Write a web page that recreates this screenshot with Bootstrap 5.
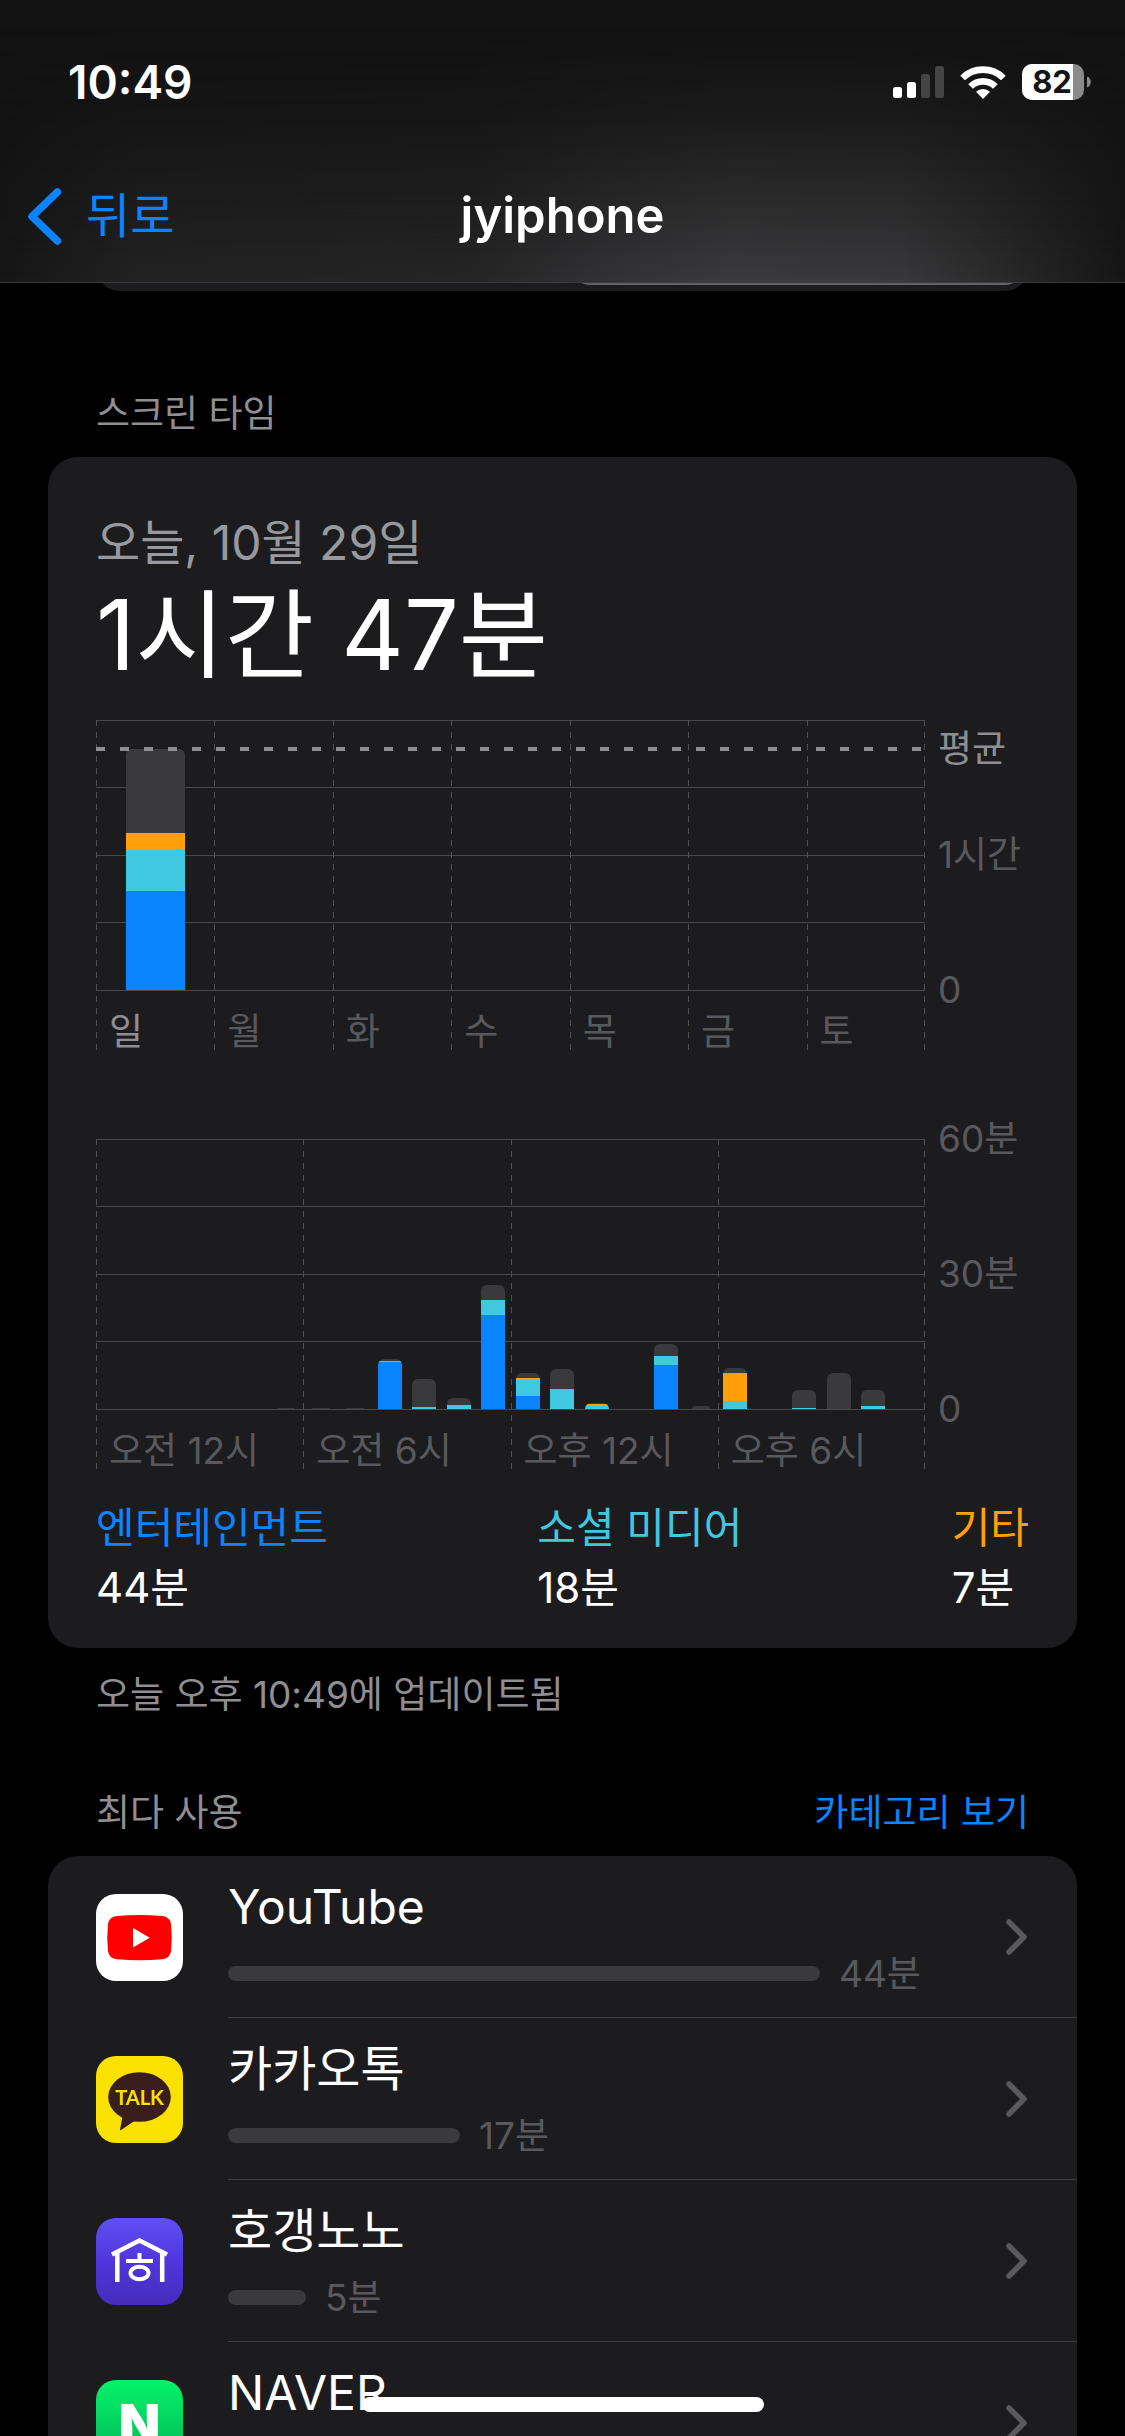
<!DOCTYPE html>
<html lang="ko" data-bs-theme="dark">
<head>
<meta charset="utf-8">
<meta name="viewport" content="width=device-width, initial-scale=1">
<title>jyiphone</title>
<link href="https://cdn.jsdelivr.net/npm/bootstrap@5.3.0/dist/css/bootstrap.min.css" rel="stylesheet">
<style>
  :root {
    --blue: #0a84ff; --teal: #40c8e0; --orange: #ff9f0a; --idle: #3a3a3c;
    --panel: #1c1c1e; --rule: #48484a; --dim: #59595d; --gray: #8e8e93;
  }
  body { background: #000; color: #fff; font-family: Inter, "Noto Sans CJK KR", sans-serif; }
  a { text-decoration: none; }
  .phone { height: 100vh; }

  /* translucent header */
  .topbar { z-index: 10; border-bottom: 1px solid #3a3a3c; background: #121212; }
  .topbar::before {
    content: ""; position: absolute; inset: 0; z-index: -1;
    background: linear-gradient(90deg, #161616, #222223 12%, #252526 42%, #323234 53%, #3b3b3d 65%, #39393b 80%, #2a2a2b 89%, #161616);
    -webkit-mask-image: linear-gradient(transparent 10%, rgba(0,0,0,.2) 40%, rgba(0,0,0,.6) 70%, #000);
    mask-image: linear-gradient(transparent 10%, rgba(0,0,0,.2) 40%, rgba(0,0,0,.6) 70%, #000);
  }
  .statusbar { height: 150px; padding: 14px 34px 0 68px; }
  .clock { font-size: 46px; line-height: 60px; font-weight: 600; }
  .status-icons { gap: 16px; }
  .navrow { height: 132px; padding: 0 28px; }
  .back { color: var(--blue); font-size: 48px; gap: 24px; flex: 1 1 0; }
  .screen-title { font-size: 49px; font-weight: 600; line-height: 60px; }

  /* week / day switch, mostly scrolled under the header */
  .switch { height: 90px; margin: -82px 96px 0; padding: 6px; border-radius: 24px; background: var(--panel); }
  .switch-on { width: 49%; border-radius: 18px; background: #636366; }

  .caption { font-size: 37px; line-height: 48px; color: var(--gray); }
  .side { padding-left: 48px; padding-right: 48px; }
  .inset { padding-left: 96px; padding-right: 96px; }
  .first-caption { margin-top: 99px; margin-bottom: 19px; }
  .panel { background: var(--panel); border-radius: 30px; }
  .usage { padding: 56px 48px 30px; }
  .day { font-size: 48px; line-height: 60px; color: #98989f; }
  .total { font-size: 97px; line-height: 124px; margin-bottom: 23px; }

  /* charts */
  .chart-text { font-size: 37px; line-height: 48px; color: var(--dim); }
  .plot { height: 331px; }
  .axis { width: 104px; padding-left: 13px; display: grid; align-content: start; }
  .axis-hours { grid-template-rows: 5px 106px 135px 48px; }
  .axis-minutes { grid-template-rows: 135px 135px 48px; margin-top: -24px; }
  .guides { inset: 0; display: grid; grid-template-rows: 67px 68px 67px 68px 1px; }
  .guides > div { border-top: 1px solid var(--rule); }
  .columns { inset: 0; }
  .columns > div { flex: 1 1 0; padding: 0 0 0 13px; display: flex; align-items: flex-end; position: relative; line-height: 38px; }
  .columns > div::before, .columns::after {
    content: ""; width: 1px; position: absolute; top: 0; bottom: 0; left: 0;
    background: repeating-linear-gradient(#505053 0 6px, transparent 6px 12px);
  }
  .columns::after { left: auto; right: 0; }
  .stacks { left: 0; right: 0; top: 0; height: 270px; }
  .stacks > div { flex: 1 1 0; display: flex; flex-direction: column; justify-content: flex-end; align-items: center; }
  .stack { width: 24px; border-radius: 6px 6px 0 0; overflow: hidden; }
  .stack-wide { width: 59px; border-radius: 6px 6px 0 0; overflow: hidden; }
  .stack-slim { width: 18px; }
  .ent { background: var(--blue); } .soc { background: var(--teal); }
  .oth { background: var(--orange); } .idle { background: var(--idle); }
  .average { left: 0; right: 2px; top: 27px; height: 4px; background: repeating-linear-gradient(90deg, #8e8e93 0 9px, transparent 9px 24px); }
  .charts { gap: 88px; }
  .legend { font-size: 42px; line-height: 60px; margin-top: 28px; }
  .t-ent { color: var(--blue); } .t-soc { color: var(--teal); } .t-oth { color: var(--orange); }

  /* most used */
  .updated { margin-top: 23px; margin-bottom: 70px; }
  .list-head { margin-bottom: 19px; }
  .app { padding-left: 48px; gap: 45px; color: #fff; }
  .app-icon { width: 87px; height: 87px; }
  .app-body { height: 162px; padding-right: 50px; border-bottom: 1px solid #3d3d40; }
  .app-name { font-size: 48px; line-height: 62px; margin-bottom: 12px; }
  .app-use { gap: 19px; height: 48px; }
  .meter { height: 15px; border-radius: 8px; background: var(--idle); }
  .home-bar { width: 402px; height: 15px; bottom: 24px; left: 0; right: 0; margin: auto; border-radius: 8px; background: #fff; z-index: 20; }
</style>
</head>
<body>
<div class="phone position-relative overflow-hidden">
  <header class="topbar position-relative">
    <div class="statusbar d-flex align-items-center justify-content-between">
      <span class="clock">10:49</span>
      <div class="status-icons d-flex align-items-center">
        <svg width="51" height="32" viewBox="0 0 51 32" fill="#fff" aria-hidden="true"><rect y="21" width="9" height="11" rx="2.5"/><rect x="14" y="16" width="9" height="16" rx="2.5"/><rect x="28" y="8" width="9" height="24" rx="2.5" fill="#444"/><rect x="42" width="9" height="32" rx="2.5" fill="#444"/></svg>
        <svg width="46" height="33" viewBox="0 0 46 33" aria-hidden="true"><g fill="none" stroke="#fff" stroke-width="6.600"><path d="M2.600 12a29 29 0 0 1 40.800 0"/><path d="M10.600 20.500a17.600 17.600 0 0 1 24.800 0"/></g><path d="M23 33l-7-7.200a10 10 0 0 1 14 0z" fill="#fff"/></svg>
        <svg width="69" height="36" viewBox="0 0 69 36" aria-hidden="true"><defs><clipPath id="cell"><rect width="62" height="36" rx="10"/></clipPath></defs><g clip-path="url(#cell)"><rect width="62" height="36" fill="#8a8a8a"/><rect width="51" height="36" fill="#fff"/></g><path d="M65 12.500c5 1.500 5 9.500 0 11z" fill="#8a8a8a"/><text x="30" y="29" font-family="Inter, sans-serif" font-size="31" font-weight="700" text-anchor="middle" fill="#151515">82</text></svg>
      </div>
    </div>
    <nav class="navrow d-flex align-items-center">
      <a href="#" class="back d-flex align-items-center">
        <svg width="34" height="57" viewBox="0 0 34 57" fill="none" stroke="#0a84ff" stroke-width="7.500" stroke-linecap="round" stroke-linejoin="round" aria-hidden="true"><path d="M29.500 4 4 28.500l25.500 24.500"/></svg>
        <span>뒤로</span>
      </a>
      <h1 class="screen-title m-0">jyiphone</h1>
      <span style="flex:1 1 0"></span>
    </nav>
  </header>

  <div class="switch d-flex justify-content-end" aria-hidden="true"><div class="switch-on"></div></div>

  <main>
    <h2 class="caption inset first-caption fw-normal">스크린 타임</h2>
    <div class="side">
      <section class="panel usage">
        <div class="day">오늘, 10월 29일</div>
        <div class="total">1시간 47분</div>

        <div class="charts d-flex flex-column">
          <div class="d-flex chart-text">
            <div class="plot position-relative flex-grow-1">
              <div class="guides position-absolute"><div></div><div></div><div></div><div></div><div></div></div>
              <div class="columns position-absolute d-flex">
                <div style="color:#8e8e93">일</div><div>월</div><div>화</div><div>수</div><div>목</div><div>금</div><div>토</div>
              </div>
              <div class="stacks position-absolute d-flex">
                <div><div class="stack-wide"><div class="idle" style="height:84px"></div><div class="oth" style="height:17px"></div><div class="soc" style="height:41px"></div><div class="ent" style="height:99px"></div></div></div>
                <div></div><div></div><div></div><div></div><div></div><div></div>
              </div>
              <div class="average position-absolute"></div>
            </div>
            <div class="axis axis-hours"><span></span><span style="color:#8e8e93">평균</span><span>1시간</span><span>0</span></div>
          </div>

          <div class="d-flex chart-text">
            <div class="plot position-relative flex-grow-1">
              <div class="guides position-absolute"><div></div><div></div><div></div><div></div><div></div></div>
              <div class="columns position-absolute d-flex">
                <div>오전 12시</div><div>오전 6시</div><div>오후 12시</div><div>오후 6시</div>
              </div>
              <div class="stacks position-absolute d-flex">
                <div></div><div></div><div></div><div></div><div></div>
                <div><div class="stack stack-slim"><div class="idle" style="height:1px"></div></div></div>
                <div><div class="stack stack-slim"><div class="idle" style="height:1px"></div></div></div>
                <div><div class="stack stack-slim"><div class="idle" style="height:1px"></div></div></div>
                <div><div class="stack"><div class="idle" style="height:2px"></div><div class="soc" style="height:1px"></div><div class="ent" style="height:47px"></div></div></div>
                <div><div class="stack"><div class="idle" style="height:28px"></div><div class="soc" style="height:2px"></div></div></div>
                <div><div class="stack"><div class="idle" style="height:7px"></div><div class="soc" style="height:4px"></div></div></div>
                <div><div class="stack"><div class="idle" style="height:15px"></div><div class="soc" style="height:15px"></div><div class="ent" style="height:94px"></div></div></div>
                <div><div class="stack"><div class="idle" style="height:5px"></div><div class="oth" style="height:2px"></div><div class="soc" style="height:16px"></div><div class="ent" style="height:13px"></div></div></div>
                <div><div class="stack"><div class="idle" style="height:20px"></div><div class="soc" style="height:20px"></div></div></div>
                <div><div class="stack"><div class="idle" style="height:1px"></div><div class="oth" style="height:2px"></div><div class="soc" style="height:3px"></div></div></div>
                <div></div>
                <div><div class="stack"><div class="idle" style="height:12px"></div><div class="soc" style="height:9px"></div><div class="ent" style="height:44px"></div></div></div>
                <div><div class="stack stack-slim"><div class="idle" style="height:3px"></div></div></div>
                <div><div class="stack"><div class="idle" style="height:5px"></div><div class="oth" style="height:28px"></div><div class="soc" style="height:8px"></div></div></div>
                <div></div>
                <div><div class="stack"><div class="idle" style="height:18px"></div><div class="soc" style="height:1px"></div></div></div>
                <div><div class="stack"><div class="idle" style="height:36px"></div></div></div>
                <div><div class="stack"><div class="idle" style="height:16px"></div><div class="soc" style="height:3px"></div></div></div>
                <div></div>
              </div>
            </div>
            <div class="axis axis-minutes"><span>60분</span><span>30분</span><span>0</span></div>
          </div>
        </div>

        <div class="legend d-flex justify-content-between">
          <div><div class="t-ent">엔터테인먼트</div><div>44분</div></div>
          <div><div class="t-soc">소셜 미디어</div><div>18분</div></div>
          <div><div class="t-oth">기타</div><div>7분</div></div>
        </div>
      </section>
    </div>
    <p class="caption inset updated">오늘 오후 10:49에 업데이트됨</p>

    <div class="caption inset list-head d-flex justify-content-between">
      <h2 class="caption fw-normal m-0">최다 사용</h2>
      <a href="#" class="t-ent">카테고리 보기</a>
    </div>
    <div class="side">
      <div class="panel">
        <a href="#" class="app d-flex align-items-center">
          <svg class="app-icon flex-shrink-0" viewBox="0 0 87 87" aria-hidden="true"><rect width="87" height="87" rx="20" fill="#fff"/><path d="M21 22q22.500-2 45 0 8 .8 9 8 1.500 13.500 0 27-1 7.500-9 8.300-22.500 1.700-45 0-8-.8-9-8.300-1.500-13.500 0-27 1-7.200 9-8z" fill="#f00"/><path d="M37 34v19.500l16.800-9.700z" fill="#fff"/></svg>
          <div class="app-body flex-grow-1 d-flex align-items-center justify-content-between">
            <div><div class="app-name">YouTube</div><div class="app-use d-flex align-items-center chart-text"><div class="meter" style="width:592px"></div>44분</div></div>
            <svg width="21" height="36" viewBox="0 0 21 36" fill="none" stroke="#5a5a5e" stroke-width="5.500" stroke-linecap="round" stroke-linejoin="round" aria-hidden="true"><path d="M3 3l15 15L3 33"/></svg>
          </div>
        </a>
        <a href="#" class="app d-flex align-items-center">
          <svg class="app-icon flex-shrink-0" viewBox="0 0 87 87" aria-hidden="true"><rect width="87" height="87" rx="20" fill="#fae100"/><ellipse cx="43.500" cy="41" rx="31.300" ry="24.800" fill="#3a1d1d"/><path d="M27 58l-3 15.500q0 1 1 .5L40 64z" fill="#3a1d1d"/><text x="43.500" y="48.500" font-family="Lato, sans-serif" font-weight="700" font-size="20" text-anchor="middle" fill="#fae100">TALK</text></svg>
          <div class="app-body flex-grow-1 d-flex align-items-center justify-content-between">
            <div><div class="app-name">카카오톡</div><div class="app-use d-flex align-items-center chart-text"><div class="meter" style="width:232px"></div>17분</div></div>
            <svg width="21" height="36" viewBox="0 0 21 36" fill="none" stroke="#5a5a5e" stroke-width="5.500" stroke-linecap="round" stroke-linejoin="round" aria-hidden="true"><path d="M3 3l15 15L3 33"/></svg>
          </div>
        </a>
        <a href="#" class="app d-flex align-items-center">
          <svg class="app-icon flex-shrink-0" viewBox="0 0 87 87" aria-hidden="true"><defs><linearGradient id="violet" x1="0" y1="0" x2="0" y2="1"><stop offset="0" stop-color="#5f50f4"/><stop offset=".5" stop-color="#5036dc"/><stop offset="1" stop-color="#452cbc"/></linearGradient></defs><rect width="87" height="87" rx="20" fill="url(#violet)"/><g fill="none" stroke="#fff" stroke-width="4.500"><path d="M16 36.500 43.500 22.500 71 36.500"/><path d="M21.300 34v30M66.200 34v30"/><path stroke-width="4" d="M43.500 35v7M30 43h27"/><ellipse cx="43.500" cy="55" rx="9" ry="6.200" stroke-width="4"/></g></svg>
          <div class="app-body flex-grow-1 d-flex align-items-center justify-content-between">
            <div><div class="app-name">호갱노노</div><div class="app-use d-flex align-items-center chart-text"><div class="meter" style="width:78px"></div>5분</div></div>
            <svg width="21" height="36" viewBox="0 0 21 36" fill="none" stroke="#5a5a5e" stroke-width="5.500" stroke-linecap="round" stroke-linejoin="round" aria-hidden="true"><path d="M3 3l15 15L3 33"/></svg>
          </div>
        </a>
        <a href="#" class="app d-flex align-items-center">
          <svg class="app-icon flex-shrink-0" viewBox="0 0 87 87" aria-hidden="true"><defs><linearGradient id="green" x1="0" y1="0" x2="0" y2="1"><stop offset="0" stop-color="#04f36a"/><stop offset="1" stop-color="#03b254"/></linearGradient></defs><rect width="87" height="87" rx="20" fill="url(#green)"/><text x="43.500" y="63" font-family="Inter, sans-serif" font-weight="900" font-size="54" text-anchor="middle" fill="#fff">N</text></svg>
          <div class="app-body flex-grow-1 d-flex align-items-center justify-content-between">
            <div><div class="app-name">NAVER</div><div class="app-use d-flex align-items-center chart-text"><div class="meter" style="width:60px"></div></div></div>
            <svg width="21" height="36" viewBox="0 0 21 36" fill="none" stroke="#5a5a5e" stroke-width="5.500" stroke-linecap="round" stroke-linejoin="round" aria-hidden="true"><path d="M3 3l15 15L3 33"/></svg>
          </div>
        </a>
      </div>
    </div>
  </main>
  <div class="home-bar position-absolute"></div>
</div>
<script src="https://cdn.jsdelivr.net/npm/bootstrap@5.3.0/dist/js/bootstrap.bundle.min.js"></script>
</body>
</html>
